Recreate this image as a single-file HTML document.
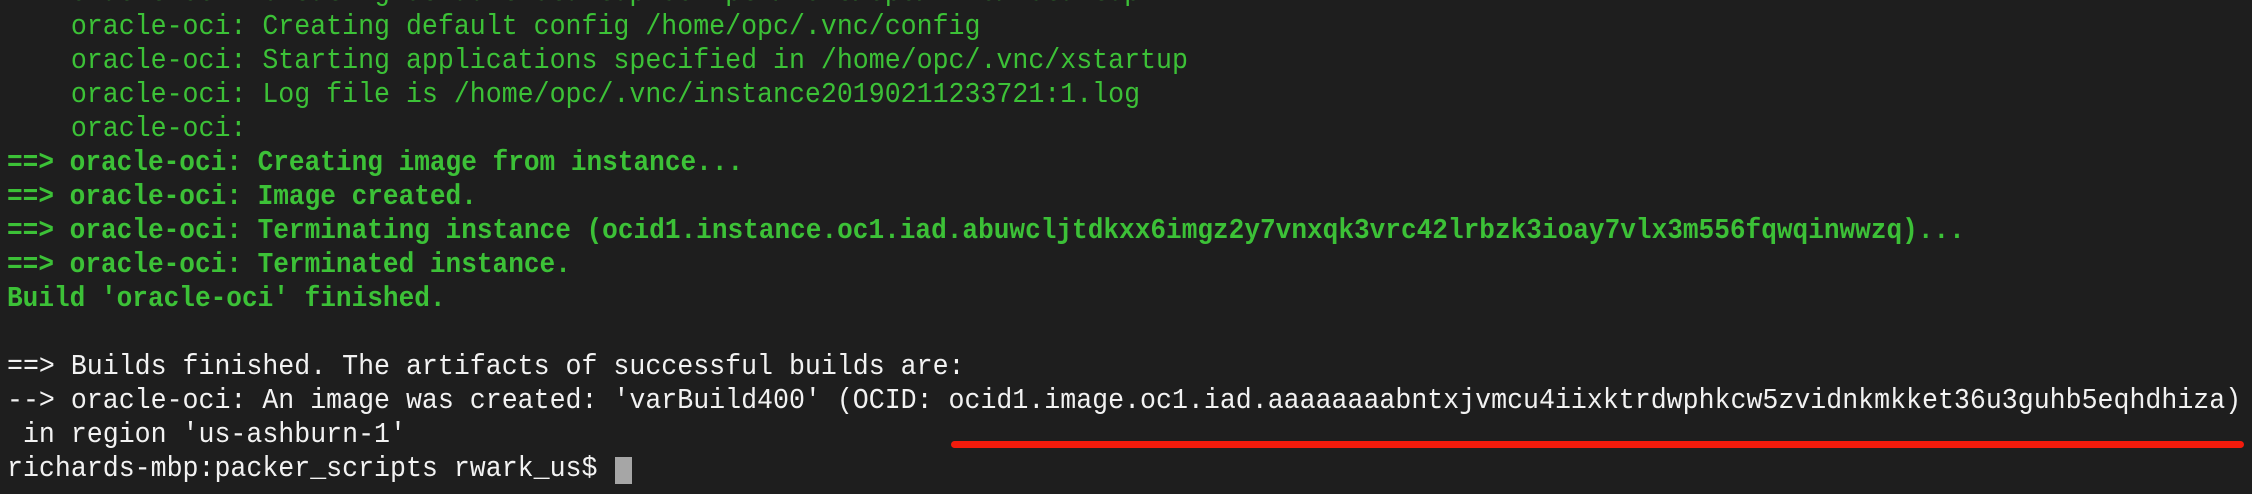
<!DOCTYPE html>
<html><head><meta charset="utf-8"><style>
html,body{margin:0;padding:0;}
body{width:2252px;height:494px;background:#1e1e1e;overflow:hidden;position:relative;
font-family:"Liberation Mono",monospace;font-size:29px;}
.l{position:absolute;left:7px;height:34px;line-height:34px;white-space:pre;transform-origin:0 50%;transform:scaleX(0.917);}
.g{color:#3cc137;}
.b{font-weight:bold;transform:scaleX(0.9);}
.w{color:#f2f2f2;}
</style></head><body>
<div class="l g" style="top:-24px">    oracle-oci: Creating default startup script /home/opc/.vnc/xstartup</div>
<div class="l g" style="top:10px">    oracle-oci: Creating default config /home/opc/.vnc/config</div>
<div class="l g" style="top:44px">    oracle-oci: Starting applications specified in /home/opc/.vnc/xstartup</div>
<div class="l g" style="top:78px">    oracle-oci: Log file is /home/opc/.vnc/instance20190211233721:1.log</div>
<div class="l g" style="top:112px">    oracle-oci:</div>
<div class="l g b" style="top:146px">==&gt; oracle-oci: Creating image from instance...</div>
<div class="l g b" style="top:180px">==&gt; oracle-oci: Image created.</div>
<div class="l g b" style="top:214px">==&gt; oracle-oci: Terminating instance (ocid1.instance.oc1.iad.abuwcljtdkxx6imgz2y7vnxqk3vrc42lrbzk3ioay7vlx3m556fqwqinwwzq)...</div>
<div class="l g b" style="top:248px">==&gt; oracle-oci: Terminated instance.</div>
<div class="l g b" style="top:282px">Build 'oracle-oci' finished.</div>
<div class="l w" style="top:350px">==&gt; Builds finished. The artifacts of successful builds are:</div>
<div class="l w" style="top:384px">--&gt; oracle-oci: An image was created: 'varBuild400' (OCID: ocid1.image.oc1.iad.aaaaaaaabntxjvmcu4iixktrdwphkcw5zvidnkmkket36u3guhb5eqhdhiza)</div>
<div class="l w" style="top:418px"> in region 'us-ashburn-1'</div>
<div class="l w" style="top:452px">richards-mbp:packer_scripts rwark_us$ </div>
<div style="position:absolute;left:615px;top:457px;width:17px;height:27px;background:#a6a6a6"></div>
<div style="position:absolute;left:951px;top:441px;width:1293px;height:7px;background:#f21b0c;border-radius:4px"></div>
</body></html>
